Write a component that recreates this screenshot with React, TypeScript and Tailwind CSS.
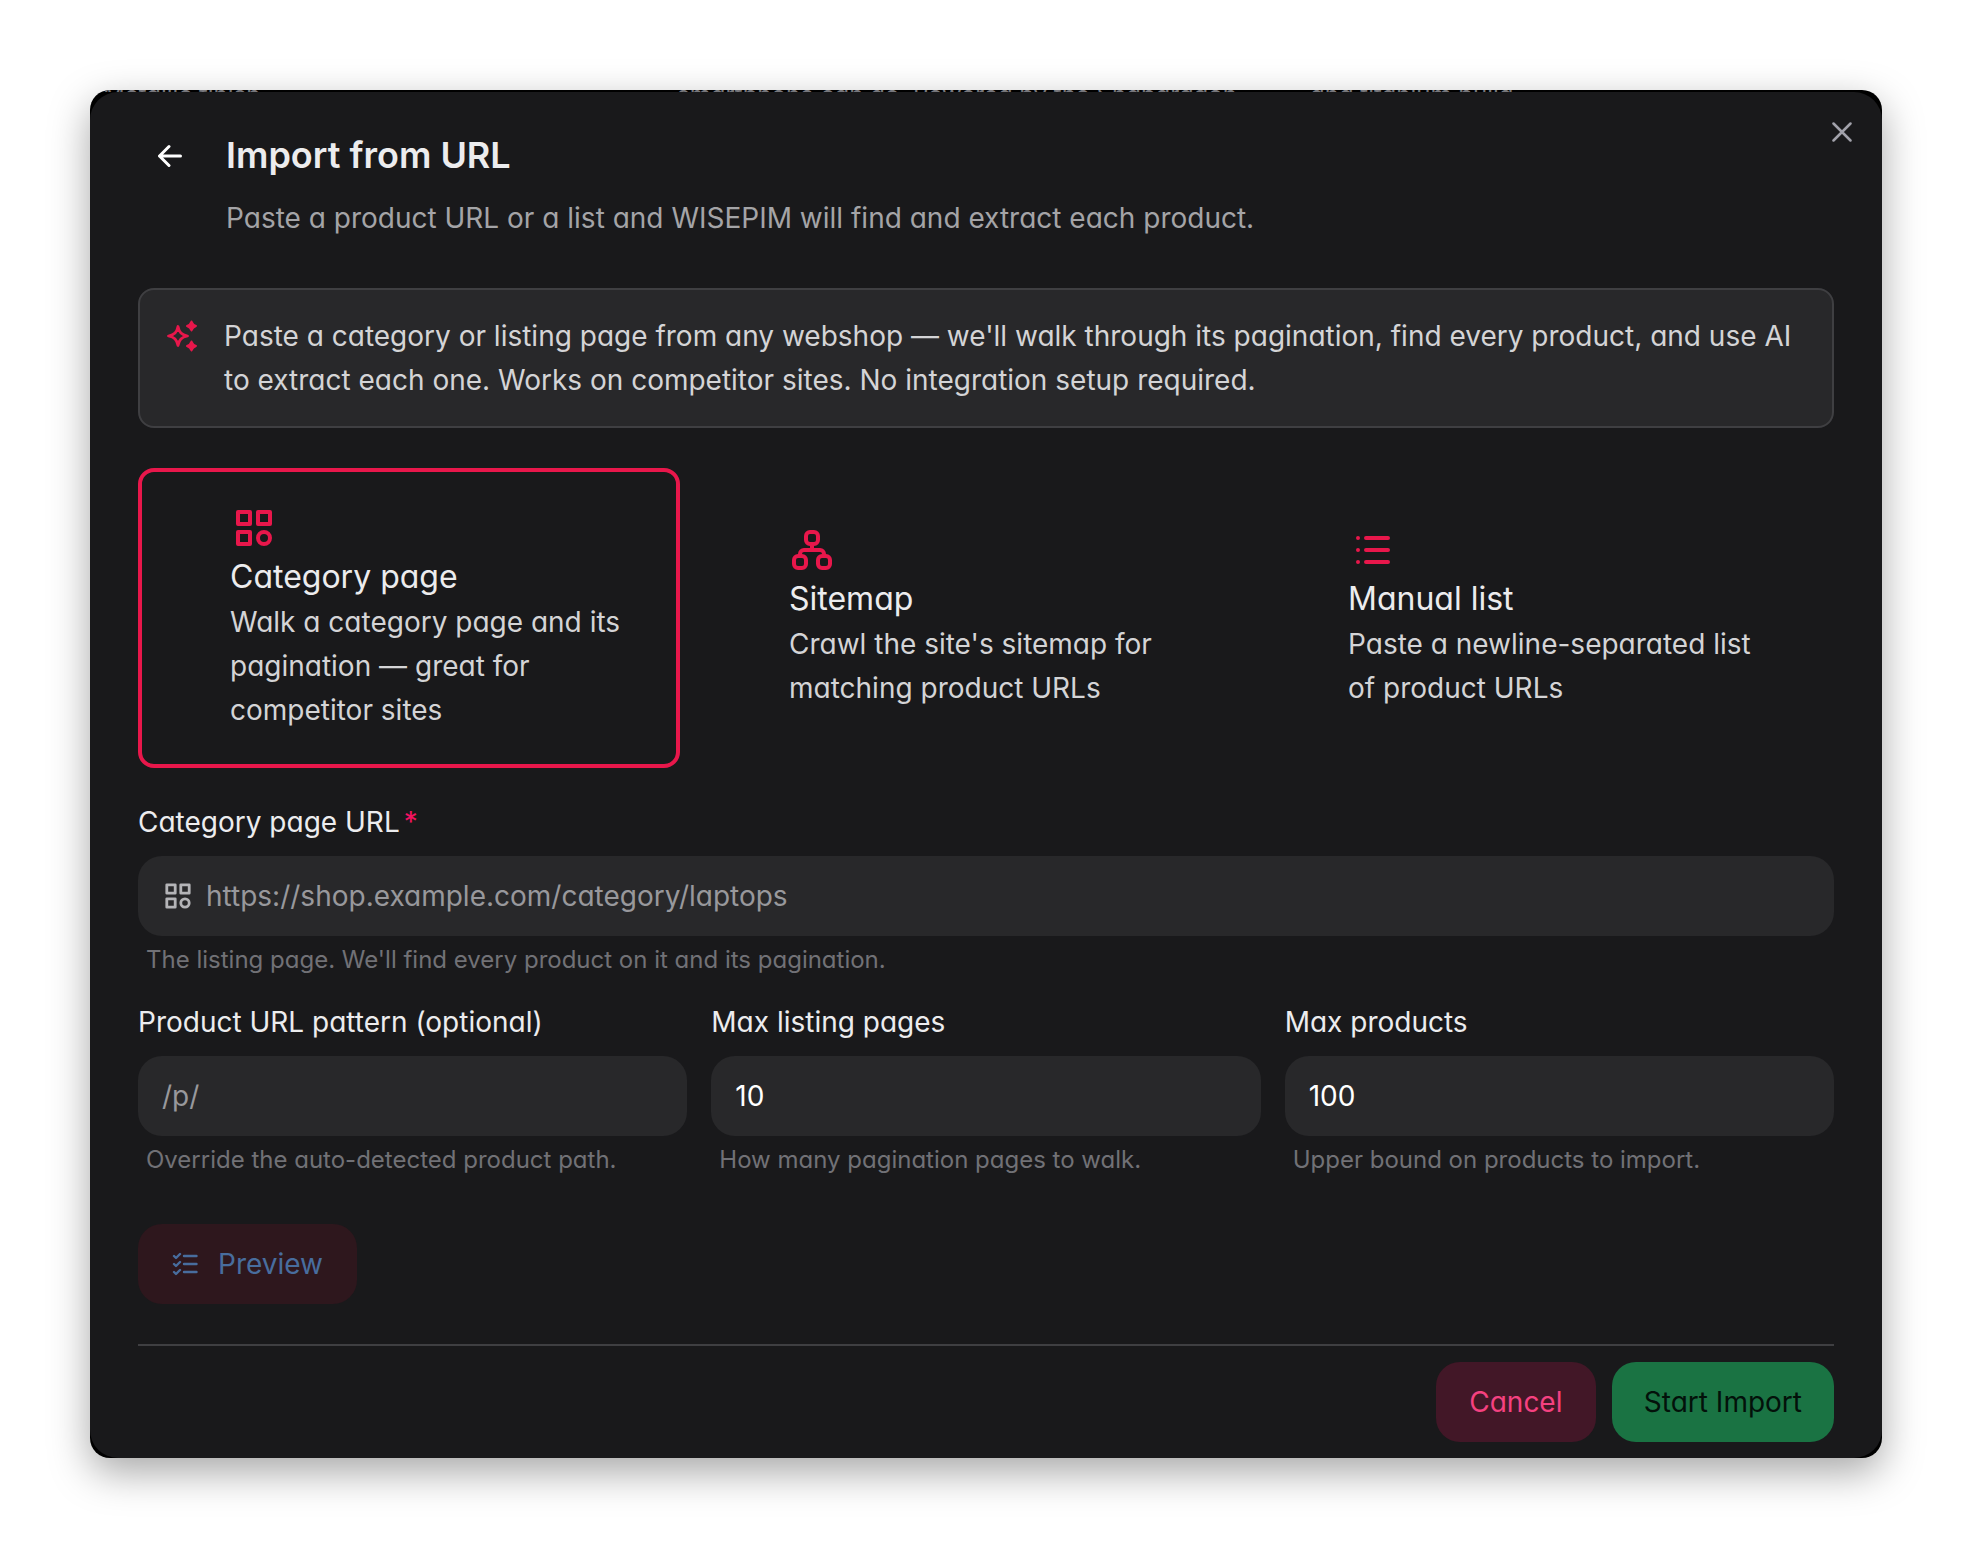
import React, { useState } from "react";

type IconProps = { className?: string };

// Four tiles, the last one round
const CategoryIcon = ({ className }: IconProps) => (
    <svg viewBox="0 0 20 20" className={className} fill="none" stroke="currentColor" strokeWidth="2" strokeLinejoin="round" aria-hidden="true">
        <path d="M2 2h6v6H2zM12 2h6v6h-6zM2 12h6v6H2z" />
        <circle cx="15" cy="15" r="3" />
    </svg>
);

const SitemapIcon = ({ className }: IconProps) => (
    <svg viewBox="0 0 24 24" className={className} fill="none" stroke="currentColor" strokeWidth="2" strokeLinecap="round" strokeLinejoin="round" aria-hidden="true">
        <rect x="8.500" y="3" width="6" height="6" rx="2" />
        <rect x="2.500" y="15" width="6" height="6" rx="2" />
        <rect x="14.500" y="15" width="6" height="6" rx="2" />
        <path d="M11.500 9v3M5.500 15v-1a2 2 0 0 1 2-2h8a2 2 0 0 1 2 2v1" />
    </svg>
);

const ListIcon = ({ className }: IconProps) => (
    <svg viewBox="0 0 24 24" className={className} fill="none" stroke="currentColor" strokeWidth="2" strokeLinecap="round" aria-hidden="true">
        <path d="M9 6h11M9 12h11M9 18h11M5 6v.01M5 12v.01M5 18v.01" />
    </svg>
);

const SparklesIcon = ({ className }: IconProps) => (
    <svg viewBox="0 0 32 32" className={className} aria-hidden="true">
        <path d="M12 6.500C13.200 12.500 15.500 14.800 21.500 16C15.500 17.200 13.200 19.500 12 25.500C10.800 19.500 8.500 17.200 2.500 16C8.500 14.800 10.800 12.500 12 6.500Z" fill="none" stroke="currentColor" strokeWidth="2.800" strokeLinejoin="round" />
        <path d="M25.500 1.500Q26.700 4.800 30 6Q26.700 7.200 25.500 10.500Q24.300 7.200 21 6Q24.300 4.800 25.500 1.500ZM25.500 21.500Q26.700 24.800 30 26Q26.700 27.200 25.500 30.500Q24.300 27.200 21 26Q24.300 24.800 25.500 21.500Z" fill="currentColor" stroke="currentColor" strokeWidth="2" strokeLinejoin="round" />
    </svg>
);

const ChecklistIcon = ({ className }: IconProps) => (
    <svg viewBox="0 0 26 26" className={className} fill="none" stroke="currentColor" strokeWidth="2.400" strokeLinecap="round" strokeLinejoin="round" aria-hidden="true">
        <path d="M12 5h12.500M12 13h12.500M12 21h12.500M2 5l2 2 4-4M2 13l2 2 4-4M2 21l2 2 4-4" />
    </svg>
);

const ArrowLeftIcon = ({ className }: IconProps) => (
    <svg viewBox="0 0 24 24" className={className} fill="none" stroke="currentColor" strokeWidth="3" strokeLinecap="round" strokeLinejoin="round" aria-hidden="true">
        <path d="M22.500 12H1.500M11 2.500L1.500 12l9.500 9.500" />
    </svg>
);

const CloseIcon = ({ className }: IconProps) => (
    <svg viewBox="0 0 20 20" className={className} fill="none" stroke="currentColor" strokeWidth="2.500" strokeLinecap="round" aria-hidden="true">
        <path d="M1.500 1.500l17 17M18.500 1.500l-17 17" />
    </svg>
);

const sources = [
    {
        id: "category",
        title: "Category page",
        description: "Walk a category page and its pagination — great for competitor sites",
        Icon: CategoryIcon,
        iconClass: "ml-1 h-10 w-10",
    },
    {
        id: "sitemap",
        title: "Sitemap",
        description: "Crawl the site's sitemap for matching product URLs",
        Icon: SitemapIcon,
        iconClass: "h-12 w-12",
    },
    {
        id: "manual",
        title: "Manual list",
        description: "Paste a newline-separated list of product URLs",
        Icon: ListIcon,
        iconClass: "h-12 w-12",
    },
];

const limits = [
    { id: "pattern", label: "Product URL pattern (optional)", placeholder: "/p/", value: "", hint: "Override the auto-detected product path." },
    { id: "max-pages", label: "Max listing pages", placeholder: "", value: "10", hint: "How many pagination pages to walk." },
    { id: "max-products", label: "Max products", placeholder: "", value: "100", hint: "Upper bound on products to import." },
];

export default function App() {
    const [source, setSource] = useState("category");

    return (
        <div className="min-h-screen bg-white p-[90px] font-['Inter',sans-serif] text-[28px] leading-[44px] text-[#ececee] [font-feature-settings:'cv11']">
            <div className="overflow-hidden rounded-[20px] bg-black shadow-[0_14px_40px_rgba(0,0,0,0.35)]">
                {/* Sliver of the product table behind the dialog */}
                <div aria-hidden="true" className="grid h-[2px] grid-cols-[574px_633px_1fr] overflow-hidden pl-[13px] text-[24px] leading-[10px] whitespace-nowrap text-[#77777c]">
                    <span>Metallic finish</span>
                    <span>smartphone can do. Powered by the Snapdragon</span>
                    <span>and titanium build</span>
                </div>

                <main className="relative rounded-[28px] bg-[#19191b] px-12 pt-10 pb-4">
                    <button type="button" aria-label="Close" className="absolute top-[30px] right-[30px] text-[#a1a1aa]">
                        <CloseIcon className="h-5 w-5" />
                    </button>

                    <header className="flex">
                        <button type="button" aria-label="Go back" className="flex h-12 w-[88px] items-center pl-5 text-white">
                            <ArrowLeftIcon className="h-6 w-6" />
                        </button>
                        <div>
                            <h1 className="text-[36px] leading-[46px] font-semibold">Import from URL</h1>
                            <p className="mt-[18px] text-[#a4a4a7]">Paste a product URL or a list and WISEPIM will find and extract each product.</p>
                        </div>
                    </header>

                    <div className="mt-12 flex gap-[26px] rounded-2xl border-2 border-[#3f3f42] bg-[#28282a] px-[26px] py-[24px]">
                        <SparklesIcon className="mt-[6px] h-8 w-8 shrink-0 text-[#e8174b]" />
                        <p className="text-[#d4d4d6]">
                            Paste a category or listing page from any webshop — we'll walk through its pagination, find every product, and use AI to extract each one. Works on competitor sites. No integration setup required.
                        </p>
                    </div>

                    <div role="radiogroup" aria-label="Import source" className="mt-10 grid grid-cols-3 gap-[17px] pr-9">
                        {sources.map(({ id, title, description, Icon, iconClass }) => (
                            <label
                                key={id}
                                className={`flex cursor-pointer items-center rounded-2xl border-4 py-8 pr-10 pl-[88px] ${source === id ? "border-[#e8174b]" : "border-transparent"}`}
                            >
                                <input type="radio" name="source" value={id} checked={source === id} onChange={() => setSource(id)} className="sr-only" />
                                <span className="block">
                                    <span className="flex h-12 items-center text-[#e8174b]">
                                        <Icon className={iconClass} />
                                    </span>
                                    <span className="block pt-[2px] text-[32px] leading-[46px]">{title}</span>
                                    <span className="block text-[#d4d4d6]">{description}</span>
                                </span>
                            </label>
                        ))}
                    </div>

                    <div className="mt-8">
                        <label htmlFor="page-url" className="block">
                            Category page URL<span className="ml-1 text-[#f31260]">*</span>
                        </label>
                        <div className="mt-3 flex h-20 items-center gap-[14px] rounded-3xl bg-[#28282a] px-[26px]">
                            <CategoryIcon className="h-7 w-7 shrink-0 text-[#b4b4b7]" />
                            <input id="page-url" type="url" required placeholder="https://shop.example.com/category/laptops" className="w-full bg-transparent outline-none placeholder:text-[#98989c]" />
                        </div>
                        <p className="mt-2 px-2 text-[24px] leading-8 text-[#717176]">The listing page. We'll find every product on it and its pagination.</p>
                    </div>

                    <div className="mt-6 grid grid-cols-3 gap-6">
                        {limits.map((field) => (
                            <div key={field.id}>
                                <label htmlFor={field.id} className="block">{field.label}</label>
                                <input
                                    id={field.id}
                                    type="text"
                                    defaultValue={field.value}
                                    placeholder={field.placeholder}
                                    className="mt-3 block h-20 w-full rounded-3xl bg-[#28282a] px-6 text-white outline-none placeholder:text-[#98989c]"
                                />
                                <p className="mt-2 px-2 text-[24px] leading-8 text-[#717176]">{field.hint}</p>
                            </div>
                        ))}
                    </div>

                    <button type="button" disabled className="mt-12 flex h-20 items-center gap-5 rounded-3xl bg-[#2e171d] px-[34px] text-[#486d9e]">
                        <ChecklistIcon className="h-[26px] w-[26px]" />
                        Preview
                    </button>

                    <footer className="mt-10 flex justify-end gap-4 border-t-2 border-[#3f3f42] pt-4">
                        <button type="button" className="h-20 min-w-40 rounded-3xl bg-[#421727] px-8 text-[#f54180]">Cancel</button>
                        <button type="button" className="h-20 rounded-3xl bg-[#1a7343] px-8 text-[#03110a]">Start Import</button>
                    </footer>
                </main>
            </div>
        </div>
    );
}
